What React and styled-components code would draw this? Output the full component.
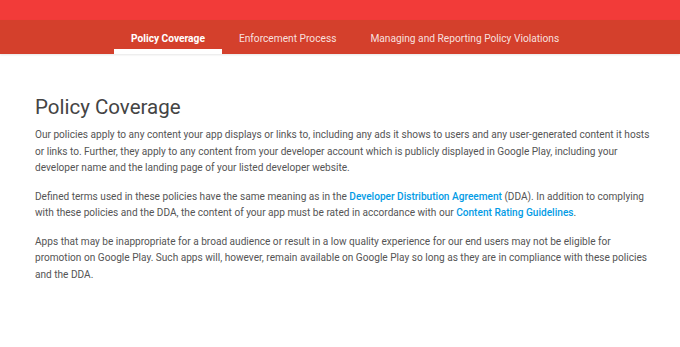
import React from "react";
import styled, { createGlobalStyle } from "styled-components";

const GlobalStyle = createGlobalStyle`
  body {
    margin: 0;
    background: #fff;
    font-family: Roboto, "Liberation Sans", Arial, sans-serif;
  }
`;

const TopBar = styled.div`
  height: 20px;
  background: #f23b39;
`;

const NavBar = styled.nav`
  display: flex;
  height: 34px;
  padding-left: 114px;
  background: #d4402c;
  box-shadow: 0 1px 2px rgba(0, 0, 0, 0.1);
`;

const Tab = styled.a`
  display: flex;
  align-items: center;
  padding: 7px 17px 0;
  font-size: 10.2px;
  color: ${({ active }) => (active ? "#fff" : "rgba(255, 255, 255, 0.85)")};
  font-weight: ${({ active }) => (active ? 700 : 400)};
  border-bottom: 5px solid ${({ active }) => (active ? "#fff" : "transparent")};
  text-decoration: none;
  white-space: nowrap;
`;

const Content = styled.main`
  padding: 39px 28px 0 35px;
`;

const Title = styled.h1`
  margin: 0 0 6px;
  font-size: 20.5px;
  font-weight: 400;
  color: #444;
  line-height: 28px;
`;

const Paragraph = styled.p`
  margin: 0 0 12px;
  font-size: 10.1px;
  line-height: 16.5px;
  color: #555;
`;

const Link = styled.a`
  color: #039be5;
  font-weight: 500;
  text-decoration: none;
`;

const tabs = [
  "Policy Coverage",
  "Enforcement Process",
  "Managing and Reporting Policy Violations",
];

export default function App() {
  return (
    <>
      <GlobalStyle />
      <TopBar />
      <NavBar>
        {tabs.map((t, i) => (
          <Tab key={t} active={i === 0}>
            {t}
          </Tab>
        ))}
      </NavBar>
      <Content>
        <Title>Policy Coverage</Title>
        <Paragraph>
          Our policies apply to any content your app displays or links to,
          including any ads it shows to users and any user-generated content it
          hosts or links to. Further, they apply to any content from your
          developer account which is publicly displayed in Google Play,
          including your developer name and the landing page of your listed
          developer website.
        </Paragraph>
        <Paragraph>
          Defined terms used in these policies have the same meaning as in the{" "}
          <Link>Developer Distribution Agreement</Link> (DDA). In addition to
          complying with these policies and the DDA, the content of your app
          must be rated in accordance with our{" "}
          <Link>Content Rating Guidelines</Link>.
        </Paragraph>
        <Paragraph>
          Apps that may be inappropriate for a broad audience or result in a
          low quality experience for our end users may not be eligible for
          promotion on Google Play. Such apps will, however, remain available on
          Google Play so long as they are in compliance with these policies and
          the DDA.
        </Paragraph>
      </Content>
    </>
  );
}
